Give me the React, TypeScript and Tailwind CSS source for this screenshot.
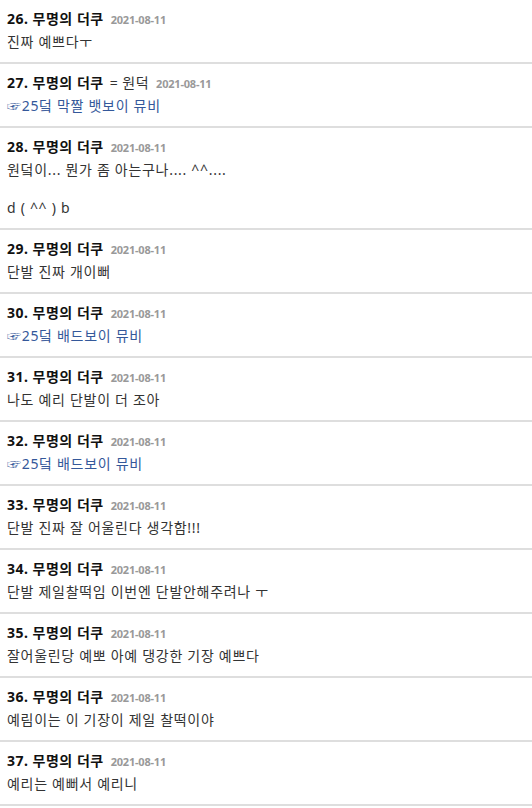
type Comment = {
  no: number;
  tag?: string;
  lines: string[];
  link?: boolean;
};

const comments: Comment[] = [
  { no: 26, lines: ["진짜 예쁘다ㅜ"] },
  { no: 27, tag: "= 원덕", lines: ["☞25덬 막짤 뱃보이 뮤비"], link: true },
  { no: 28, lines: ["원덬이... 뭔가 좀 아는구나.... ^^....", "", "d ( ^^ ) b"] },
  { no: 29, lines: ["단발 진짜 개이뻐"] },
  { no: 30, lines: ["☞25덬 배드보이 뮤비"], link: true },
  { no: 31, lines: ["나도 예리 단발이 더 조아"] },
  { no: 32, lines: ["☞25덬 배드보이 뮤비"], link: true },
  { no: 33, lines: ["단발 진짜 잘 어울린다 생각함!!!"] },
  { no: 34, lines: ["단발 제일찰떡임 이번엔 단발안해주려나 ㅜ"] },
  { no: 35, lines: ["잘어울린당 예뽀 아예 댕강한 기장 예쁘다"] },
  { no: 36, lines: ["예림이는 이 기장이 제일 찰떡이야"] },
  { no: 37, lines: ["예리는 예뻐서 예리니"] },
];

export default function App() {
  return (
    <div
      className="w-[532px] bg-white"
      style={{ fontFamily: '"Noto Sans", "Noto Sans CJK KR", sans-serif' }}
    >
      {comments.map((c) => (
        <div
          key={c.no}
          className="border-b-2 border-[#dedede] px-[7px] pt-[9px] pb-[11px]"
        >
          {/* header */}
          <div className="flex items-baseline h-[20px] leading-[20px] text-[14px] text-[#111]">
            <span className="font-bold tracking-[0.5px]">{c.no}. 무명의 더쿠</span>
            {c.tag && (
              <span className="ml-[6px] tracking-[0.5px] text-[#333]">{c.tag}</span>
            )}
            <span className="ml-[7px] text-[11px] font-bold text-[#999] tracking-[-0.2px]">
              2021-08-11
            </span>
          </div>

          {/* body */}
          <div
            className={`mt-[3px] text-[14px] leading-[19px] tracking-[0.7px] ${
              c.link ? "text-[#34589a]" : "text-[#333]"
            }`}
          >
            {c.lines.map((l, i) => (
              <div key={i} className="h-[19px] whitespace-pre">
                {l}
              </div>
            ))}
          </div>
        </div>
      ))}
    </div>
  );
}
